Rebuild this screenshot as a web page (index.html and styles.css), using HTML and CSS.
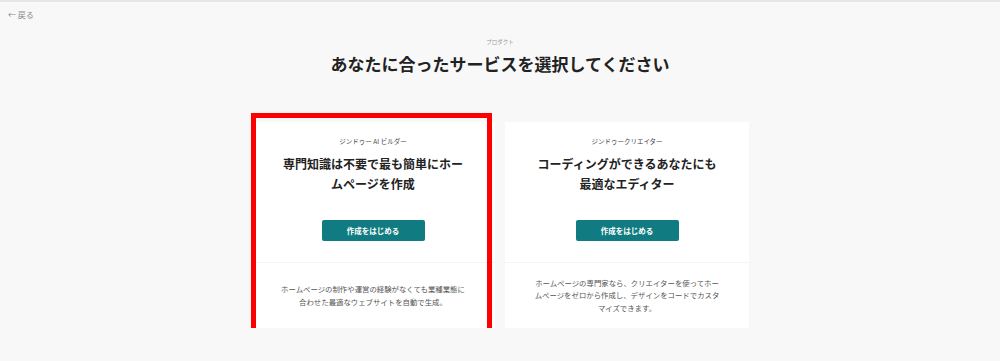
FILE: index.html
```html
<!DOCTYPE html>
<html lang="ja">
<head>
  <meta charset="UTF-8">
  <title>プロダクト</title>
  <meta name="viewport" content="width=device-width, initial-scale=1.0">
  <link rel="stylesheet" href="styles.css">
</head>
<body>

  <div class="topbar">
    <a class="back" href="#">&larr; 戻る</a>
  </div>

  <div class="header">
    <p class="eyebrow">プロダクト</p>
    <h1>あなたに合ったサービスを選択してください</h1>
  </div>

  <div class="cards">
    <div class="card">
      <span class="highlight"></span>
      <div class="card-top">
        <p class="card-label">ジンドゥー AI ビルダー</p>
        <h2>専門知識は不要で最も簡単にホームページを作成</h2>
        <button>作成をはじめる</button>
      </div>
      <div class="card-bottom">
        <p>ホームページの制作や運営の経験がなくても業種業態に合わせた最適なウェブサイトを自動で生成。</p>
      </div>
    </div>

    <div class="card">
      <div class="card-top">
        <p class="card-label">ジンドゥークリエイター</p>
        <h2>コーディングができるあなたにも<br>最適なエディター</h2>
        <button>作成をはじめる</button>
      </div>
      <div class="card-bottom">
        <p>ホームページの専門家なら、クリエイターを使ってホームページをゼロから作成し、デザインをコードでカスタマイズできます。</p>
      </div>
    </div>
  </div>

</body>
</html>
```

FILE: styles.css
```css
* {
  box-sizing: border-box;
}

body {
  font-family: "Noto Sans CJK JP", "Noto Sans", sans-serif;
  margin: 0;
  background: #f8f8f8;
  color: #222;
}

.topbar {
  border-top: 2px solid #e6e6e6;
  padding: 8px 8px 0;
  font-size: 8px;
  line-height: 10px;
}

.back {
  display: block;
  color: #888;
  text-decoration: none;
}

.header {
  text-align: center;
}

.eyebrow {
  margin: 18px 0 0;
  font-size: 5.5px;
  line-height: 8px;
  color: #999;
}

h1 {
  margin: 6px 0 0;
  font-size: 17px;
  line-height: 24px;
  font-weight: bold;
  color: #222;
}

.cards {
  display: flex;
  justify-content: center;
  align-items: flex-start;
  gap: 10px;
  margin-top: 46px;
}

.card {
  position: relative;
  width: 244px;
  height: 206px;
  background: #fff;
}

/* red frame drawn over the first card */
.highlight {
  position: absolute;
  top: -9px;
  left: 0;
  display: block;
  width: 241px;
  height: 220px;
  border: 5px solid #ff0000;
  pointer-events: none;
}

.card-top {
  height: 141px;
  padding: 14px 28px 0;
  text-align: center;
  border-bottom: 1px solid #f4f4f4;
}

.card-label {
  margin: 0;
  font-size: 6.5px;
  line-height: 10px;
  color: #444;
}

h2 {
  margin: 8px 0 0;
  font-size: 12px;
  line-height: 20px;
  font-weight: bold;
  color: #222;
}

button {
  margin-top: 26px;
  width: 103px;
  height: 21px;
  padding: 0;
  font-family: inherit;
  font-size: 7.5px;
  font-weight: bold;
  color: #fff;
  background: #107b80;
  border: none;
  border-radius: 2px;
  cursor: pointer;
}

.card-bottom {
  height: 65px;
  display: flex;
  align-items: center;
  justify-content: center;
  padding: 0 28px;
  text-align: center;
}

.card-bottom p {
  margin: 0;
  font-size: 7.4px;
  line-height: 12.5px;
  color: #555;
}
```
